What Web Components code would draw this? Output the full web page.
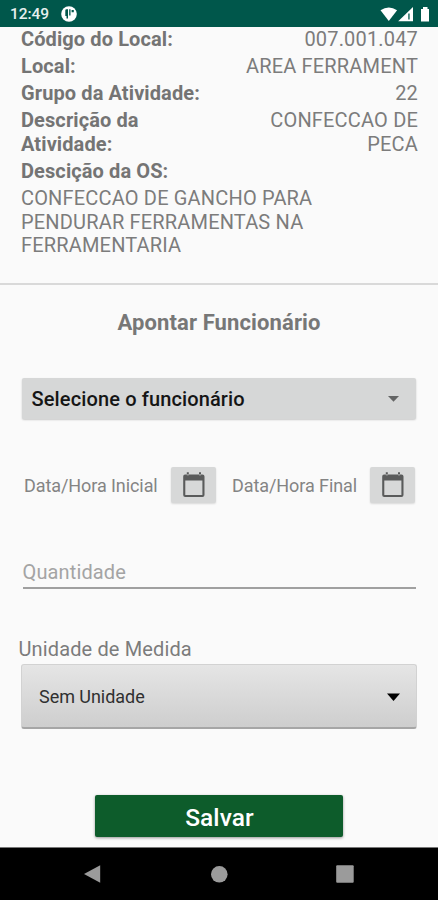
<!DOCTYPE html>
<html lang="pt-BR">
<head>
<meta charset="utf-8">
<title>Apontar Funcionário</title>
<style>
html,body{margin:0;height:100%;background:#fafafa}
body{font-family:Roboto,"Noto Sans",sans-serif;color:#747474;overflow:hidden}
</style>
</head>
<body>
<work-app></work-app>
<script>
const define = (name, html) => {
  const t = document.createElement('template');
  t.innerHTML = html;
  customElements.define(name, class extends HTMLElement {
    constructor() {
      super();
      this.attachShadow({mode: 'open'}).append(t.content.cloneNode(true));
    }
  });
};

define('status-bar', `
<style>
:host{display:flex;height:27px;background:#00574b;color:#e6efee;align-items:center;padding:1px 6px 0 10px;box-sizing:border-box;font-size:15.5px;font-weight:500}
.time{width:51px;letter-spacing:-.05px;line-height:20px}
.gap{flex:1}
svg{display:block;fill:#fff}
</style>
<span class="time">12:49</span>
<svg width="16" height="16" viewBox="0 0 16 16"><circle cx="8" cy="8" r="7.8"/><path d="M4.300 4.500Q4.300 3.300 5.500 3.300H7V12.500H5.500V10H4.300zM8.200 3.300H9.500V9.500H8.200zM10.600 4h2.200v2.200h-2.200z" fill="#00574b"/></svg>
<span class="gap"></span>
<svg width="52" height="17" viewBox="0 0 52 17"><path d="M.5 4.2Q8.800-1 17.100 4.200L8.800 15z"/><path d="M18.200 15.200 33 1v14.200z"/><path d="M28.300 7.500h1.300v6h-1.300z" fill="#00574b"/><path d="M41 3h2V1h4.500v2H49v12.500h-8z"/></svg>`);

define('detail-row', `
<style>
:host{display:flex;justify-content:space-between;font-size:20px;line-height:23.6px;margin-bottom:3.65px}
.k{font-weight:700;max-width:180px;letter-spacing:.1px}
.v{font-weight:400;text-align:right;max-width:180px;color:#7c7c7c;letter-spacing:.17px}
</style>
<span class="k"><slot name="key"></slot></span><span class="v"><slot></slot></span>`);

define('employee-select', `
<style>
:host{display:flex;align-items:center;justify-content:space-between;height:41px;box-sizing:border-box;margin:0 22px;padding:0 17px 0 9.500px;background:#d6d7d7;border-radius:2px;box-shadow:0 1px 2px #0003;color:#151515;font-size:20px;font-weight:500;letter-spacing:.13px}
svg{display:block}
</style>
<slot></slot>
<svg width="11" height="6" viewBox="0 0 11 6"><path d="M0 0h11L5.500 5.800z" fill="#646565"/></svg>`);

define('date-picker', `
<style>
:host{display:flex;align-items:center;font-size:18px;height:36px;color:#848484;font-weight:400}
.label{flex:1;white-space:nowrap;letter-spacing:-.08px;padding-top:1px}
button{all:unset;width:45px;height:36px;background:#d7d8d8;border-radius:2px;box-shadow:0 1px 2px #0002;display:grid;place-items:center}
svg{display:block}
</style>
<span class="label"><slot></slot></span>
<button aria-label="Calendário"><svg width="24" height="26" viewBox="0 0 24 26"><path d="M1.200 4.500Q1.200 2.500 3 2.500H20.500Q22.500 2.500 22.500 4.500V23Q22.500 25 20.500 25H3.200Q1.200 25 1.200 23zM3.300 8.500V22.900H20.400V8.500zM4.800 .3h2v3h-2zM17 .3h2v3h-2z" fill="#5a5b5b" fill-rule="evenodd"/></svg></button>`);

define('text-field', `
<style>
:host{display:block;margin:0 22px 0 22.500px;padding-bottom:3px;border-bottom:2px solid #a0a0a0;font-size:20px;line-height:24px;color:#a4a4a4;letter-spacing:.13px}
</style>
<slot></slot>`);

define('unit-select', `
<style>
:host{display:block}
.label{margin-left:18.500px;font-size:20px;line-height:24px;letter-spacing:.13px;color:#7c7c7c}
.box{display:flex;align-items:center;justify-content:space-between;box-sizing:border-box;height:65px;margin:3px 21px 0;padding:0 16px 0 17px;background:linear-gradient(#e5e5e5,#cecece);border:1px solid #d2d2d2;border-bottom:2px solid #a6a6a6;border-radius:3px;color:#303030;font-size:18px;letter-spacing:-.04px}
svg{display:block;margin-top:2px}
</style>
<div class="label"><slot name="label"></slot></div>
<div class="box"><slot></slot><svg width="13" height="8" viewBox="0 0 13 8"><path d="M0 .5h13L6.500 8z"/></svg></div>`);

define('save-button', `
<style>
:host{display:grid;place-items:center;width:248px;height:42px;margin:0 auto 0 95px;border-radius:2px;background:#0d5c2b;color:#fff;font-size:24.500px;line-height:29px;font-weight:500;box-shadow:0 1px 3px #0006;padding:2px 0 0 1px;box-sizing:border-box;letter-spacing:.1px}
</style>
<span><slot></slot></span>`);

define('nav-bar', `
<style>
:host{display:flex;height:53px;box-sizing:border-box;background:#000;border-top:1px solid #777;align-items:center;justify-content:space-between;padding:0 84px}
svg{display:block;fill:#9b9b9b}
</style>
<svg width="17" height="18" viewBox="0 0 17 18"><path d="M0 9 16.200 .2v17.600z"/></svg>
<svg width="18" height="17" viewBox="0 0 18 17"><circle cx="9.300" cy="8.300" r="8.300"/></svg>
<svg width="18" height="18" viewBox="0 0 18 18"><rect x=".2" y=".2" width="17.500" height="17.500" rx="1"/></svg>`);

define('work-app', `
<style>
:host{display:flex;flex-direction:column;width:438px;height:900px;background:#fafafa}
.details{height:256px;box-sizing:border-box;padding:.6px 20px 0 21px}
.note{font-size:20px;line-height:23.500px;color:#7c7c7c;width:310px;letter-spacing:.17px}
hr{margin:0;border:0;height:2px;background:#d9d9d9}
h1{margin:24px 0 42px;font-size:22px;line-height:27px;font-weight:700;text-align:center;color:#777;letter-spacing:.12px}
.dates{display:grid;grid-template-columns:192px 183px;column-gap:16px;margin:48px 0 0 24px}
text-field{margin-top:57px}
unit-select{margin-top:48px}
save-button{margin-top:66px}
nav-bar{margin-top:auto}
</style>
<status-bar></status-bar>
<section class="details">
<detail-row><span slot="key">Código do Local:</span>007.001.047</detail-row>
<detail-row><span slot="key">Local:</span>AREA FERRAMENT</detail-row>
<detail-row><span slot="key">Grupo da Atividade:</span>22</detail-row>
<detail-row><span slot="key">Descrição da<br>Atividade:</span>CONFECCAO DE<br>PECA</detail-row>
<detail-row><span slot="key">Descição da OS:</span></detail-row>
<div class="note">CONFECCAO DE GANCHO PARA PENDURAR FERRAMENTAS NA FERRAMENTARIA</div>
</section>
<hr>
<h1>Apontar Funcionário</h1>
<employee-select>Selecione o funcionário</employee-select>
<div class="dates"><date-picker>Data/Hora Inicial</date-picker><date-picker>Data/Hora Final</date-picker></div>
<text-field>Quantidade</text-field>
<unit-select><span slot="label">Unidade de Medida</span>Sem Unidade</unit-select>
<save-button>Salvar</save-button>
<nav-bar></nav-bar>`);
</script>
</body>
</html>
